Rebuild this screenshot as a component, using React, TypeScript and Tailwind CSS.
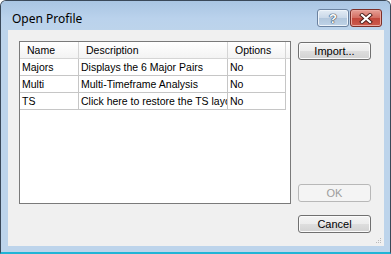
import React from "react";

const rows = [
  { name: "Majors", desc: "Displays the 6 Major Pairs", opt: "No" },
  { name: "Multi", desc: "Multi-Timeframe Analysis", opt: "No" },
  { name: "TS", desc: "Click here to restore the TS layout", opt: "No" },
];

function Button({ label, disabled, className = "" }: { label: string; disabled?: boolean; className?: string }) {
  return (
    <button
      className={
        "w-[73px] h-[18px] rounded-[3px] border text-[11px] leading-[16px] text-center " +
        (disabled
          ? "border-[#b8b8b8] bg-[#f4f4f4] text-[#9d9d9d] "
          : "border-[#707070] bg-[linear-gradient(#f4f4f4,#ececec_50%,#dedede_50%,#d2d2d2)] text-black shadow-[inset_0_0_0_1px_#fbfbfb] ") +
        className
      }
    >
      {label}
    </button>
  );
}

export default function App() {
  return (
    <div
      className="relative w-[391px] h-[254px] flex flex-col overflow-hidden rounded-t-[6px] border border-[#3a4859] border-b-2 border-b-[#21b4d6] bg-[#bdd4eb]"
      style={{ fontFamily: '"Liberation Sans", Arial, sans-serif' }}
    >
      {/* title bar */}
      <div className="h-[29px] flex items-start bg-[linear-gradient(#a9c5e3,#bad2ec_60%,#bdd4eb)]">
        <div
          className="pl-[11px] pt-[10px] text-[12px] leading-[16px] text-black"
          style={{ fontFamily: '"Noto Sans", "Open Sans", sans-serif' }}
        >
          Open Profile
        </div>
        <div className="ml-auto mr-[8px] mt-[8px] flex gap-[1px]">
          <div className="w-[32px] h-[18px] rounded-[3px] border border-[#6b82a0] bg-[linear-gradient(#e3ecf5,#c9d8e8_50%,#b1c6dc_50%,#bfd3e8)] flex items-center justify-center shadow-[inset_0_0_0_1px_#eef4fa]">
            <span
              className="text-[13px] font-bold leading-none text-white"
              style={{ textShadow: "0 0 1px #2a3a4e, 0 0 1px #2a3a4e, 0 0 1px #2a3a4e" }}
            >
              ?
            </span>
          </div>
          <div className="w-[32px] h-[18px] rounded-[3px] border border-[#7d2f28] bg-[linear-gradient(#e6a096,#d36c60_50%,#c2473b_50%,#cc5a4c)] flex items-center justify-center shadow-[inset_0_0_0_1px_#eba89f]">
            <svg width="14" height="11" viewBox="0 0 14 11">
              <path d="M3 2 L11 9 M11 2 L3 9" stroke="#4a1d18" strokeWidth="4" strokeLinecap="square" />
              <path d="M3 2 L11 9 M11 2 L3 9" stroke="#ffffff" strokeWidth="2.2" strokeLinecap="square" />
            </svg>
          </div>
        </div>
      </div>

      {/* client area */}
      <div className="relative flex-1 ml-[7px] mr-[6px] mb-[6px] bg-[#f0f0f0] flex pt-[11px] pl-[11px]">
        <div className="w-[272px] h-[163px] border border-[#7a7a7a] bg-white flex flex-col text-[10.5px] text-black overflow-hidden">
          <div className="flex h-[17px] border-b border-[#d5d5d5] bg-[linear-gradient(#ffffff,#f3f3f3)] leading-[16px]">
            <div className="w-[59px] pl-[7px] border-r border-[#d5d5d5]">Name</div>
            <div className="w-[149px] pl-[7px] border-r border-[#d5d5d5]">Description</div>
            <div className="w-[58px] pl-[7px] border-r border-[#d5d5d5]">Options</div>
          </div>
          {rows.map((r) => (
            <div key={r.name} className="flex h-[17px] w-[266px] border-b border-[#c6c6c6] leading-[16px]">
              <div className="w-[59px] pl-[2px] border-r border-[#c6c6c6] whitespace-nowrap overflow-hidden">{r.name}</div>
              <div className="w-[149px] pl-[2px] border-r border-[#c6c6c6] whitespace-nowrap overflow-hidden">{r.desc}</div>
              <div className="w-[58px] pl-[2px] border-r border-[#c6c6c6] whitespace-nowrap overflow-hidden">{r.opt}</div>
            </div>
          ))}
        </div>

        <div className="ml-[7px] flex flex-col">
          <Button label="Import..." className="mt-[1px]" />
          <Button label="OK" disabled className="mt-[124px]" />
          <Button label="Cancel" className="mt-[13px]" />
        </div>

        {/* size grip */}
        <svg className="absolute right-[2px] bottom-[2px]" width="7" height="7" viewBox="0 0 7 7">
          <rect x="5" y="1" width="1" height="1" fill="#b9b9b9" />
          <rect x="3" y="3" width="1" height="1" fill="#b9b9b9" />
          <rect x="5" y="3" width="1" height="1" fill="#b9b9b9" />
          <rect x="1" y="5" width="1" height="1" fill="#b9b9b9" />
          <rect x="3" y="5" width="1" height="1" fill="#b9b9b9" />
          <rect x="5" y="5" width="1" height="1" fill="#b9b9b9" />
        </svg>
      </div>
    </div>
  );
}
